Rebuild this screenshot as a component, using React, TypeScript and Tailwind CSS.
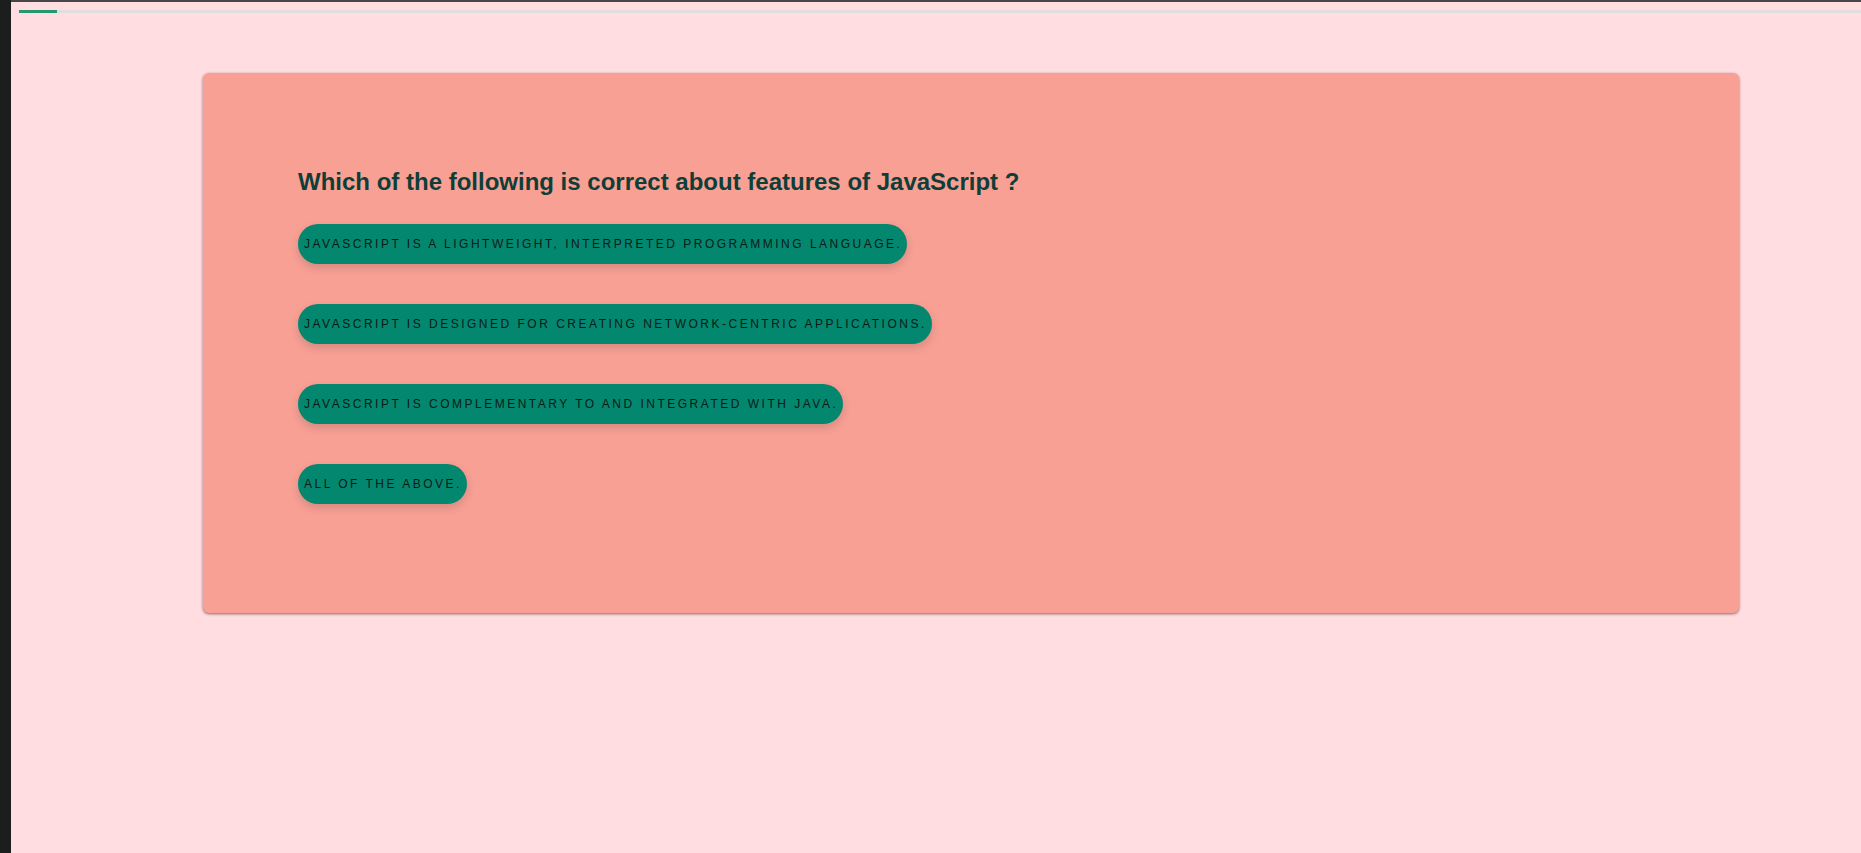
const options = [
  'JavaScript is a lightweight, interpreted programming language.',
  'JavaScript is designed for creating network-centric applications.',
  'JavaScript is complementary to and integrated with Java.',
  'All of the above.',
];

export default function App() {
  return (
    <div className="flex min-h-[853px] w-full" style={{ fontFamily: '"Liberation Sans", Arial, sans-serif' }}>
      <div className="w-[11px] shrink-0 bg-[#1c1e1d]" />
      <div className="flex-1 bg-[#ffdde1] border-t-2 border-[#474747]">
        <div className="ml-[8px] mt-[8px] h-[3px] bg-[#dedede]">
          <div className="h-full w-[38px] bg-[#24996f]" />
        </div>

        <div className="ml-[192px] mt-[60px] w-[1536px] h-[540px] rounded-md bg-[#f9a095] shadow-[0_1px_3px_rgba(60,20,20,0.6)] pl-[95px] pt-[95px]">
          <h2 className="text-[24px] leading-[28px] font-bold text-[#0e3e37]">
            Which of the following is correct about features of JavaScript ?
          </h2>
          <div className="mt-[28px] flex flex-col items-start gap-[40px]">
            {options.map((opt) => (
              <button
                key={opt}
                className="h-[40px] rounded-full bg-[#04876f] pl-[6px] pr-[5px] text-[12px] uppercase tracking-[2.5px] text-[#0b1a17] shadow-[0_4px_10px_rgba(0,0,0,0.15)]"
              >
                {opt}
              </button>
            ))}
          </div>
        </div>
      </div>
    </div>
  );
}
